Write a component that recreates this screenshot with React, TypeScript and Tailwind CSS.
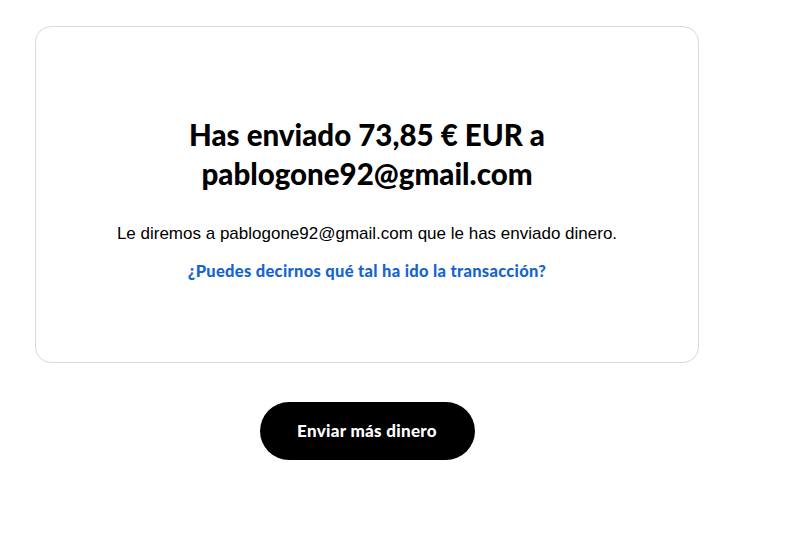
export default function App() {
  return (
    <div className="w-[800px] h-[548px] bg-white pt-[26px] pl-[35px]" style={{ fontFamily: "Lato, 'Liberation Sans', sans-serif" }}>
      <div className="w-[664px] h-[337px] border border-[#d9d9d9] rounded-[16px] flex flex-col items-center pt-[88px]">
        <h1 className="text-[29.5px] leading-[39px] font-black text-black text-center w-[430px]">
          Has enviado 73,85 € EUR a pablogone92@gmail.com
        </h1>
        <p className="mt-[29px] text-[17px] leading-[24px] text-black" style={{ fontFamily: "'Liberation Sans', Arial, sans-serif" }}>
          Le diremos a pablogone92@gmail.com que le has enviado dinero.
        </p>
        <a className="mt-[14px] text-[16.5px] leading-[22px] font-black text-[#1565d0] tracking-[0.3px]">
          ¿Puedes decirnos qué tal ha ido la transacción?
        </a>
      </div>
      <div className="w-[664px] flex justify-center mt-[39px]">
        <button className="w-[215px] h-[58px] rounded-full bg-black text-white text-[17px] font-black tracking-[0.3px]">
          Enviar más dinero
        </button>
      </div>
    </div>
  );
}
